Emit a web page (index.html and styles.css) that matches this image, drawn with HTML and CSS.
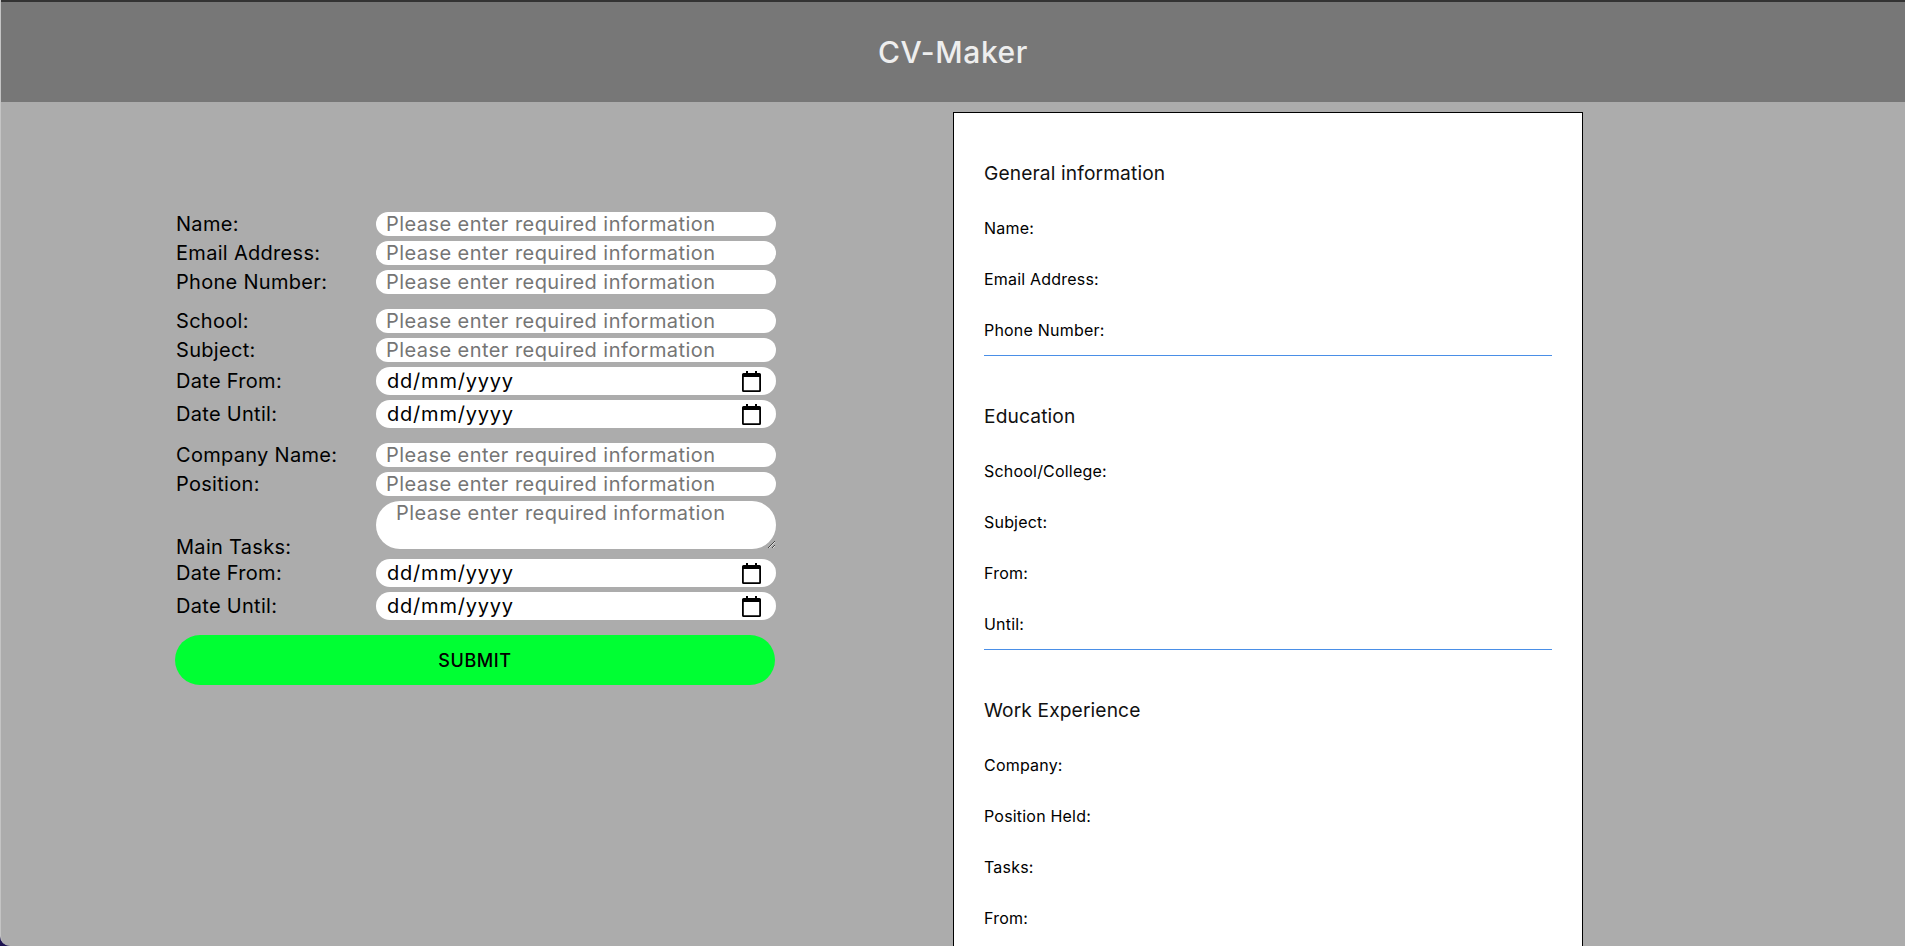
FILE: index.html
```html
<!DOCTYPE html>
<html lang="en">
<head>
    <meta charset="UTF-8">
    <meta name="viewport" content="width=device-width, initial-scale=1.0">
    <title>CV-Maker</title>
    <link rel="stylesheet" href="styles.css">
</head>
<body>
    <div class="app">
        <header class="app-header">
            <h1>CV-Maker</h1>
        </header>

        <main class="content">
            <form class="cv-form">
                <fieldset class="form-group">
                    <div class="form-row">
                        <label for="name">Name:</label>
                        <input id="name" type="text" placeholder="Please enter required information">
                    </div>
                    <div class="form-row">
                        <label for="email">Email Address:</label>
                        <input id="email" type="text" placeholder="Please enter required information">
                    </div>
                    <div class="form-row">
                        <label for="phone">Phone Number:</label>
                        <input id="phone" type="text" placeholder="Please enter required information">
                    </div>
                </fieldset>

                <fieldset class="form-group">
                    <div class="form-row">
                        <label for="school">School:</label>
                        <input id="school" type="text" placeholder="Please enter required information">
                    </div>
                    <div class="form-row">
                        <label for="subject">Subject:</label>
                        <input id="subject" type="text" placeholder="Please enter required information">
                    </div>
                    <div class="form-row">
                        <label>Date From:</label>
                        <div class="date-field">
                            <span>dd/mm/yyyy</span>
                            <svg class="calendar-icon" viewBox="0 0 19 21"><path d="M4 0h2v2h7V0h2v2h2.5A1.5 1.5 0 0 1 19 3.5v16a1.5 1.5 0 0 1-1.5 1.5h-16A1.5 1.5 0 0 1 0 19.5v-16A1.5 1.5 0 0 1 1.5 2H4zM1.800 6v13.200h15.400V6z"/></svg>
                        </div>
                    </div>
                    <div class="form-row">
                        <label>Date Until:</label>
                        <div class="date-field">
                            <span>dd/mm/yyyy</span>
                            <svg class="calendar-icon" viewBox="0 0 19 21"><path d="M4 0h2v2h7V0h2v2h2.5A1.5 1.5 0 0 1 19 3.5v16a1.5 1.5 0 0 1-1.5 1.5h-16A1.5 1.5 0 0 1 0 19.5v-16A1.5 1.5 0 0 1 1.5 2H4zM1.800 6v13.200h15.400V6z"/></svg>
                        </div>
                    </div>
                </fieldset>

                <fieldset class="form-group">
                    <div class="form-row">
                        <label for="company">Company Name:</label>
                        <input id="company" type="text" placeholder="Please enter required information">
                    </div>
                    <div class="form-row">
                        <label for="position">Position:</label>
                        <input id="position" type="text" placeholder="Please enter required information">
                    </div>
                    <div class="form-row tasks-row">
                        <label for="tasks">Main Tasks:</label>
                        <textarea id="tasks" placeholder="Please enter required information"></textarea>
                    </div>
                    <div class="form-row">
                        <label>Date From:</label>
                        <div class="date-field">
                            <span>dd/mm/yyyy</span>
                            <svg class="calendar-icon" viewBox="0 0 19 21"><path d="M4 0h2v2h7V0h2v2h2.5A1.5 1.5 0 0 1 19 3.5v16a1.5 1.5 0 0 1-1.5 1.5h-16A1.5 1.5 0 0 1 0 19.5v-16A1.5 1.5 0 0 1 1.5 2H4zM1.800 6v13.200h15.400V6z"/></svg>
                        </div>
                    </div>
                    <div class="form-row">
                        <label>Date Until:</label>
                        <div class="date-field">
                            <span>dd/mm/yyyy</span>
                            <svg class="calendar-icon" viewBox="0 0 19 21"><path d="M4 0h2v2h7V0h2v2h2.5A1.5 1.5 0 0 1 19 3.5v16a1.5 1.5 0 0 1-1.5 1.5h-16A1.5 1.5 0 0 1 0 19.5v-16A1.5 1.5 0 0 1 1.5 2H4zM1.800 6v13.200h15.400V6z"/></svg>
                        </div>
                    </div>
                </fieldset>

                <button class="submit-btn" type="button">SUBMIT</button>
            </form>

            <section class="preview">
                <div class="preview-section">
                    <h2>General information</h2>
                    <p>Name:</p>
                    <p>Email Address:</p>
                    <p>Phone Number:</p>
                </div>
                <div class="preview-section">
                    <h2>Education</h2>
                    <p>School/College:</p>
                    <p>Subject:</p>
                    <p>From:</p>
                    <p>Until:</p>
                </div>
                <div class="preview-section">
                    <h2>Work Experience</h2>
                    <p>Company:</p>
                    <p>Position Held:</p>
                    <p>Tasks:</p>
                    <p>From:</p>
                    <p>Until:</p>
                </div>
            </section>
        </main>
    </div>
</body>
</html>
```

FILE: styles.css
```css
html, body {
    height: 100%;
    margin: 0;
    overflow: hidden;
}
body {
    font-family: Inter, "Noto Sans", sans-serif;
    background-color: #1c1250;
}
.app {
    height: 100%;
    box-sizing: border-box;
    background-color: #acacac;
    border-left: 1px solid #c4c4c4;
    border-bottom-left-radius: 10px;
    overflow: hidden;
}
.app-header {
    height: 102px;
    box-sizing: border-box;
    border-top: 2px solid #333;
    background-color: #777;
    display: flex;
    align-items: center;
    justify-content: center;
}
.app-header h1 {
    margin: 0;
    color: #eee;
    font-size: 30px;
    font-weight: 500;
    letter-spacing: 0.6px;
}
.content {
    display: flex;
}
.cv-form {
    width: 600px;
    margin: 110px 0 0 174px;
}
.form-group {
    border: none;
    margin: 0 0 15px;
    padding: 0 0 0 1px;
    display: flex;
    flex-direction: column;
    gap: 5px;
}
.form-row {
    display: flex;
    align-items: center;
}
.form-row label {
    width: 200px;
    font-size: 20px;
    line-height: 24px;
    letter-spacing: 0.3px;
    color: #000;
}
.form-row input, .form-row textarea, .date-field {
    width: 400px;
    flex-shrink: 0;
    box-sizing: border-box;
    border: none;
    outline: none;
    background-color: #fff;
    border-radius: 14px;
    font-family: inherit;
    font-size: 20px;
    letter-spacing: 0.44px;
}
.form-row input {
    height: 24px;
    padding: 0 10px;
}
input::placeholder, textarea::placeholder {
    color: #757575;
}
.tasks-row {
    align-items: flex-end;
}
.tasks-row label {
    margin-bottom: -5px;
}
.form-row textarea {
    height: 48px;
    margin-bottom: 5px;
    padding: 0 20px;
    border-radius: 24px;
    display: block;
}
.date-field {
    height: 28px;
    padding: 0 15px 0 11px;
    display: flex;
    align-items: center;
    justify-content: space-between;
    color: #000;
    letter-spacing: 0.8px;
}
.calendar-icon {
    width: 19px;
    height: 21px;
}
.submit-btn {
    display: block;
    width: 600px;
    height: 50px;
    border: none;
    border-radius: 25px;
    background-color: #00ff33;
    color: #000;
    font-family: inherit;
    font-size: 18px;
    font-weight: 500;
    letter-spacing: 0.6px;
}
.preview {
    width: 630px;
    box-sizing: border-box;
    margin: 10px 0 0 178px;
    padding: 30px;
    background-color: #fff;
    border: 1px solid #000;
    flex-shrink: 0;
}
.preview-section {
    border-bottom: 1px solid #4a8fe7;
    margin-bottom: 48px;
}
.preview-section h2 {
    margin: 18px 0 33px;
    font-size: 19.2px;
    line-height: 24px;
    font-weight: 400;
    letter-spacing: 0.12px;
    color: #111;
}
.preview-section p {
    margin: 0 0 30px;
    font-size: 16px;
    line-height: 21px;
    letter-spacing: 0.2px;
    color: #000;
}
.preview-section p:last-child {
    margin-bottom: 14px;
}
```
